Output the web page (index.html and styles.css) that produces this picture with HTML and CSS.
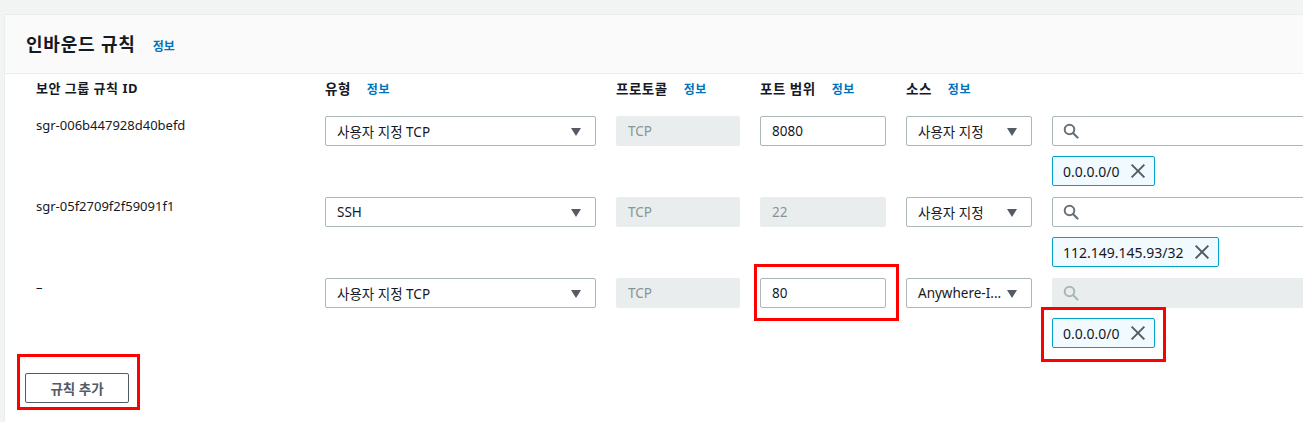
FILE: index.html
```html
<!DOCTYPE html>
<html lang="ko">
  <head>
    <meta charset="UTF-8" />
    <title>인바운드 규칙</title>
    <link rel="stylesheet" href="styles.css">
  </head>
  <body>
    <section class="panel">
      <header class="panel-header">
        <h2>인바운드 규칙</h2>
        <a class="info" href="#">정보</a>
      </header>

      <div class="rules">
        <div class="rule labels">
          <div class="label id-cell">보안 그룹 규칙 ID</div>
          <div class="label">유형 <a class="info" href="#">정보</a></div>
          <div class="label">프로토콜 <a class="info" href="#">정보</a></div>
          <div class="label">포트 범위 <a class="info" href="#">정보</a></div>
          <div class="label">소스 <a class="info" href="#">정보</a></div>
          <div></div>
        </div>

        <div class="rule">
          <div class="id-cell">sgr-006b447928d40befd</div>
          <div class="select">사용자 지정 TCP<span class="caret"></span></div>
          <div class="field disabled">TCP</div>
          <div class="field">8080</div>
          <div class="select">사용자 지정<span class="caret"></span></div>
          <div class="source">
            <div class="search">
              <svg width="16" height="16" viewBox="0 0 16 16"><circle cx="6.5" cy="6.5" r="4.8" fill="none" stroke="currentColor" stroke-width="2"/><path d="M10 10l4.5 4.5" stroke="currentColor" stroke-width="2.2" stroke-linecap="round"/></svg>
            </div>
            <div class="tag">0.0.0.0/0<span class="close"></span></div>
          </div>
        </div>

        <div class="rule">
          <div class="id-cell">sgr-05f2709f2f59091f1</div>
          <div class="select">SSH<span class="caret"></span></div>
          <div class="field disabled">TCP</div>
          <div class="field disabled">22</div>
          <div class="select">사용자 지정<span class="caret"></span></div>
          <div class="source">
            <div class="search">
              <svg width="16" height="16" viewBox="0 0 16 16"><circle cx="6.5" cy="6.5" r="4.8" fill="none" stroke="currentColor" stroke-width="2"/><path d="M10 10l4.5 4.5" stroke="currentColor" stroke-width="2.2" stroke-linecap="round"/></svg>
            </div>
            <div class="tag">112.149.145.93/32<span class="close"></span></div>
          </div>
        </div>

        <div class="rule">
          <div class="id-cell">–</div>
          <div class="select">사용자 지정 TCP<span class="caret"></span></div>
          <div class="field disabled">TCP</div>
          <div class="field mark-port">80</div>
          <div class="select">Anywhere-I...<span class="caret"></span></div>
          <div class="source">
            <div class="search disabled">
              <svg width="16" height="16" viewBox="0 0 16 16"><circle cx="6.5" cy="6.5" r="4.8" fill="none" stroke="currentColor" stroke-width="2"/><path d="M10 10l4.5 4.5" stroke="currentColor" stroke-width="2.2" stroke-linecap="round"/></svg>
            </div>
            <div class="tag mark-tag">0.0.0.0/0<span class="close"></span></div>
          </div>
        </div>
      </div>

      <div class="footer">
        <button class="add-rule">규칙 추가</button>
      </div>
    </section>
  </body>
</html>
```

FILE: styles.css
```css
* {
  margin: 0;
  padding: 0;
  box-sizing: border-box;
}

body {
  background-color: #f2f3f3;
  padding: 14px 0 0 4px;
  overflow: hidden;
  font-family: "Noto Sans", "Noto Sans CJK KR", sans-serif;
  font-size: 13px;
  color: #16191f;
}
.panel {
  width: 1400px;
  background-color: #ffffff;
  border: 1px solid #eaeded;
  min-height: 420px;
}
.panel-header {
  display: flex;
  align-items: baseline;
  gap: 17px;
  height: 59px;
  padding: 15px 21px 0;
  background-color: #fafafa;
  border-bottom: 1px solid #eaeded;
}
.panel-header h2 {
  font-size: 18px;
  font-weight: bold;
  line-height: 28px;
  letter-spacing: 0.8px;
}
.info {
  color: #0073bb;
  font-size: 12px;
  font-weight: bold;
  text-decoration: none;
  margin-left: 12px;
}
.panel-header .info {
  margin-left: 0;
}
.rules {
  padding: 0 0 0 20px;
}
.rule {
  display: grid;
  grid-template-columns: 280px 271px 124px 126px 126px 1fr;
  column-gap: 20px;
  align-items: start;
  min-height: 81px;
}
.rule.labels {
  min-height: 0;
  height: 42px;
  align-items: center;
  padding-bottom: 15px;
}
.label {
  font-weight: bold;
  font-size: 13.5px;
  letter-spacing: 0.5px;
  white-space: nowrap;
}
.id-cell {
  padding-left: 11px;
  font-size: 13px;
  color: #16191f;
}
.select,
.field,
.search {
  position: relative;
  height: 30px;
  border: 1px solid #aab7b8;
  border-radius: 2px;
  display: flex;
  align-items: center;
  padding: 0 11px;
  font-size: 13.5px;
  white-space: nowrap;
  background-color: #ffffff;
}
.select {
  padding-right: 28px;
}
.caret {
  position: absolute;
  right: 14px;
  top: 11px;
  border-left: 5px solid transparent;
  border-right: 5px solid transparent;
  border-top: 8px solid #545b64;
}
.field.disabled,
.search.disabled {
  background-color: #eaeded;
  border-color: #eaeded;
  color: #879596;
}
.search {
  color: #687078;
  width: 100%;
  padding-left: 10px;
}
.search.disabled {
  color: #aab7b8;
}
.source {
  display: flex;
  flex-direction: column;
  align-items: flex-start;
  gap: 10px;
}
.tag {
  position: relative;
  display: flex;
  align-items: center;
  gap: 10px;
  height: 30px;
  padding: 0 8px 0 10px;
  border: 1px solid #00a1c9;
  border-radius: 2px;
  background-color: #f1faff;
  font-size: 14px;
}
.close {
  position: relative;
  width: 16px;
  height: 16px;
}
.close::before,
.close::after {
  content: "";
  position: absolute;
  left: 7px;
  top: -1px;
  width: 2px;
  height: 18px;
  background-color: #545b64;
  transform: rotate(45deg);
}
.close::after {
  transform: rotate(-45deg);
}
.mark-port::after,
.mark-tag::after,
.add-rule::after {
  content: "";
  position: absolute;
  border: 3px solid #ff0000;
}
.mark-port::after {
  left: -7px;
  right: -14px;
  top: -15px;
  bottom: -14px;
}
.mark-tag::after {
  left: -12px;
  right: -12px;
  top: -12px;
  bottom: -15px;
}
.footer {
  padding: 14px 0 0 20px;
}
.add-rule {
  position: relative;
  width: 104px;
  height: 30px;
  border: 1px solid #545b64;
  border-radius: 2px;
  background-color: #ffffff;
  color: #545b64;
  font-family: "Noto Sans", "Noto Sans CJK KR", sans-serif;
  font-size: 13.5px;
  font-weight: bold;
}
.add-rule::after {
  left: -9px;
  right: -12px;
  top: -20px;
  bottom: -8px;
}
```
